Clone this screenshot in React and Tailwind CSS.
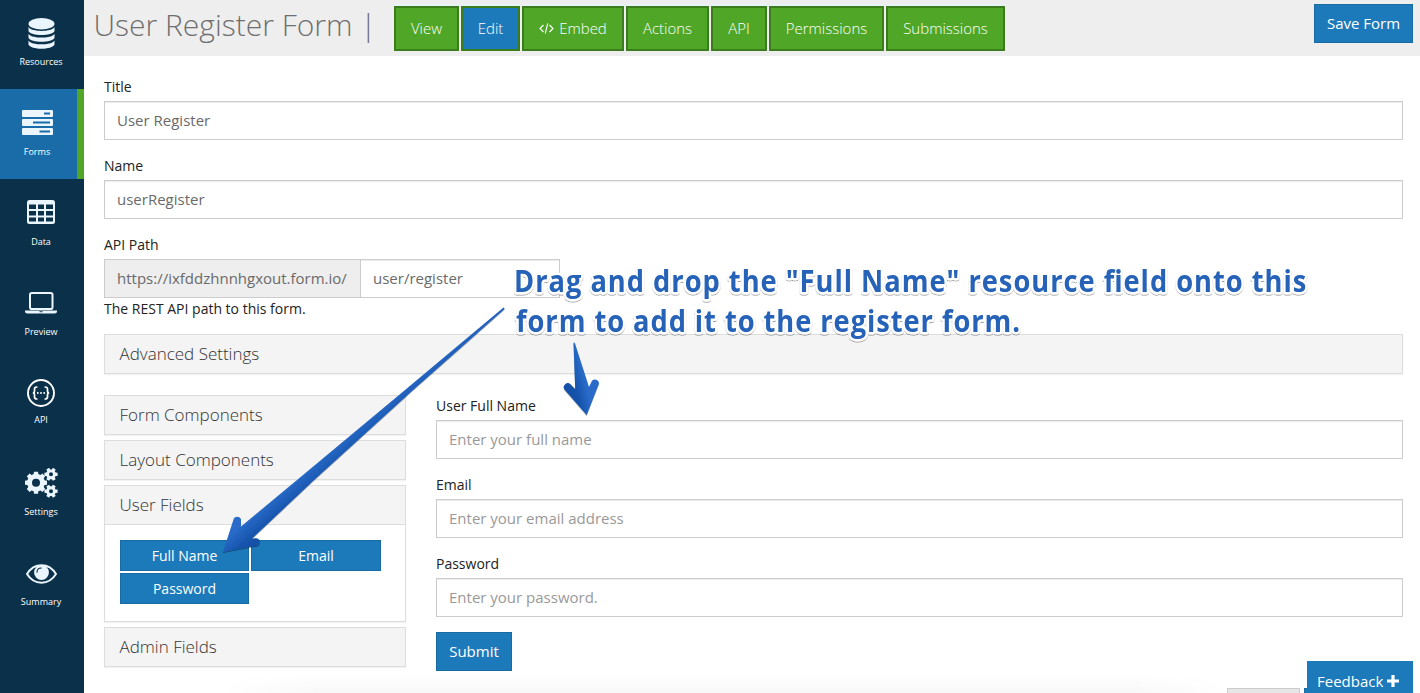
import React from "react";

const gearPath = (cx, cy, teeth, ro, ri, hole, phase = 0) => {
  const pts = [];
  const step = (Math.PI * 2) / teeth;
  for (let i = 0; i < teeth; i++) {
    const a = i * step + phase;
    [[-0.34, ri], [-0.23, ro], [0.23, ro], [0.34, ri]].forEach(([k, r]) => {
      pts.push(`${(cx + r * Math.cos(a + k * step)).toFixed(2)} ${(cy + r * Math.sin(a + k * step)).toFixed(2)}`);
    });
  }
  return `M${pts.join("L")}ZM${cx - hole} ${cy}a${hole} ${hole} 0 1 0 ${hole * 2} 0a${hole} ${hole} 0 1 0 ${-hole * 2} 0Z`;
};

const Database = () => (
  <svg className="block" width="27" height="32" viewBox="0 0 27 32" fill="#ebf5fd">
    <ellipse cx="13.500" cy="5.800" rx="13" ry="5.700" />
    <path d="M.5 9c3 5.200 23 5.200 26 0v4c-2 5.400-24 5.400-26 0zM.5 15.700c3 5.200 23 5.200 26 0v4c-2 5.400-24 5.400-26 0zM.5 22.400c3 5.200 23 5.200 26 0v4.200c-2 5.600-24 5.600-26 0z" />
  </svg>
);

const Server = () => (
  <svg className="block" width="31" height="25" viewBox="0 0 31 25">
    <g fill="#ebf5fd">
      <rect x="0" y="0" width="31" height="7" rx="1" />
      <rect x="0" y="9" width="31" height="7" rx="1" />
      <rect x="0" y="18" width="31" height="7" rx="1" />
    </g>
    <path d="M22 3.500h6M11 12.500h17M17.500 21.500h10.500" stroke="#1a6ca8" strokeWidth="2" />
  </svg>
);

const Table = () => (
  <svg className="block" width="28" height="24" viewBox="0 0 28 24">
    <path
      fillRule="evenodd"
      fill="#ebf5fd"
      d="M2.500 0h23a2.500 2.500 0 0 1 2.500 2.500v19a2.500 2.500 0 0 1-2.500 2.500h-23a2.500 2.500 0 0 1-2.500-2.500v-19A2.500 2.500 0 0 1 2.500 0zM2 4.500v4.500h7V4.500zm9 0v4.500h6V4.500zm8 0v4.500h7V4.500zM2 11v4.500h7V11zm9 0v4.500h6V11zm8 0v4.500h7V11zM2 17.500v4h7v-4zm9 0v4h6v-4zm8 0v4h7v-4z"
    />
  </svg>
);

const Laptop = () => (
  <svg className="block" width="32" height="22" viewBox="0 0 32 22">
    <rect x="5" y="1" width="22.500" height="16" rx="1.800" fill="none" stroke="#ebf5fd" strokeWidth="2" />
    <path d="M0 18.500h32v1c0 1.200-1 2-2.500 2h-27c-1.500 0-2.500-.8-2.500-2z" fill="#ebf5fd" />
    <path d="M14.500 19.700h3" stroke="#0b3049" strokeWidth=".9" />
  </svg>
);

const Braces = () => (
  <svg className="block" width="28" height="28" viewBox="0 0 28 28" fill="none" stroke="#fff" strokeLinecap="round">
    <circle cx="14" cy="14" r="13" strokeWidth="1.900" />
    <path d="M9.800 8c-2 0-2.300.8-2.300 2.300v1.700c0 1.300-.5 2-1.700 2 1.200 0 1.700.7 1.700 2v1.700c0 1.500.3 2.300 2.300 2.300M18.200 8c2 0 2.300.8 2.300 2.300v1.700c0 1.300.5 2 1.700 2-1.200 0-1.700.7-1.700 2v1.700c0 1.500-.3 2.300-2.300 2.300" strokeWidth="1.700" />
    <path d="M10.800 14h.01M14 14h.01M17.200 14h.01" strokeWidth="1.900" />
  </svg>
);

const Cogs = () => (
  <svg className="block" width="33" height="30" viewBox="0 0 33 30" fill="#ebf5fd" fillRule="evenodd">
    <path d={gearPath(11, 14.700, 8, 11.200, 8.900, 4, 0)} />
    <path d={gearPath(26, 6.300, 6, 6.800, 4.900, 2, 0)} />
    <path d={gearPath(26, 23.200, 6, 6.800, 4.900, 2, 0)} />
  </svg>
);

const Eye = () => (
  <svg className="block" width="31" height="20" viewBox="0 0 31 20">
    <path d="M1 10C8-1.800 23-1.800 30 10C23 21.500 8 21.500 1 10Z" fill="none" stroke="#ebf5fd" strokeWidth="2" />
    <circle cx="15.500" cy="8.500" r="7.400" fill="#ebf5fd" />
    <path d="M11 8.300c0-2.600 1.800-4.300 4.300-4.300" fill="none" stroke="#0b3049" strokeWidth="1.100" strokeLinecap="round" />
  </svg>
);

const navItems = [
  { label: "Resources", Icon: Database, pad: "pr-[2px] pt-[18px] h-[89px]", gap: "mt-[6px]" },
  { label: "Forms", Icon: Server, pad: "pr-[3px] pt-[21px] h-[90px] bg-[#1a6ca8] border-r-[7px] border-[#50a727]", gap: "mt-[11px]" },
  { label: "Data", Icon: Table, pad: "pr-[2px] pt-[21px] h-[90px]", gap: "mt-[12px]" },
  { label: "Preview", Icon: Laptop, pad: "pr-[2px] pt-[23px] h-[90px]", gap: "mt-[12px]" },
  { label: "API", Icon: Braces, pad: "pr-[2px] pt-[20px] h-[90px]", gap: "mt-[7px]" },
  { label: "Settings", Icon: Cogs, pad: "pr-[2px] pt-[19px] h-[90px]", gap: "mt-[8px]" },
  { label: "Summary", Icon: Eye, pad: "pr-[2px] pt-[25px] h-[90px]", gap: "mt-[12px]" },
];

const tabs = [
  ["View", "w-[65px] bg-[#50a727]"],
  ["Edit", "w-[59px] bg-[#1d7aba]"],
  ["Embed", "w-[102px] bg-[#50a727]"],
  ["Actions", "w-[83px] bg-[#50a727]"],
  ["API", "w-[56px] bg-[#50a727]"],
  ["Permissions", "w-[115px] bg-[#50a727]"],
  ["Submissions", "w-[119px] bg-[#50a727]"],
];

const inputBox = "h-[39px] border border-[#ccc] bg-white px-3 flex items-center text-[15px] shadow-[inset_0_1px_1px_rgba(0,0,0,0.075)]";

function Field({ label, value, muted }) {
  return (
    <div className="h-[79px] shrink-0">
      <div className="h-[25px] pt-[1px] text-sm leading-5 text-[#222]">{label}</div>
      <div className={`${inputBox} ${muted ? "text-[#999]" : "text-[#6a6a6a]"}`}>{value}</div>
    </div>
  );
}

function PanelHead({ children, open }) {
  return (
    <div className={`h-10 shrink-0 border border-[#ddd] bg-[#f4f4f4] px-[14.5px] flex items-center text-[17px] font-light text-[#333] ${open ? "" : "shadow-[0_1px_1px_rgba(0,0,0,0.05)]"}`}>
      {children}
    </div>
  );
}

function FieldButton({ children }) {
  return (
    <div className="h-[31px] bg-[#1d7aba] border border-[#196ba3] text-white text-sm flex items-center justify-center">
      {children}
    </div>
  );
}

function Annotation() {
  return (
    <svg className="absolute inset-0 pointer-events-none" width="1420" height="693" viewBox="0 0 1420 693">
      <defs>
        <linearGradient id="long" gradientUnits="userSpaceOnUse" x1="267" y1="503" x2="279" y2="517">
          <stop offset="0" stopColor="#296bc8" />
          <stop offset="1" stopColor="#1351a9" />
        </linearGradient>
        <linearGradient id="short" gradientUnits="userSpaceOnUse" x1="576" y1="395" x2="588" y2="392">
          <stop offset="0" stopColor="#1351a9" />
          <stop offset="1" stopColor="#296bc8" />
        </linearGradient>
        <filter id="lift" x="-10%" y="-10%" width="120%" height="130%">
          <feDropShadow dx="0" dy="1" stdDeviation="0.7" floodColor="#000" floodOpacity="0.4" />
        </filter>
      </defs>
      <path
        d="M503.500 307.500Q504.500 307.500 504.500 309L413 390L314 480L252 538.500L256 538.300A3.800 3.800 0 0 1 257.500 545.600L223 552L233.500 519.500A3.900 3.900 0 0 1 241 519.500L241 526.500L297 480L405 390Z"
        fill="url(#long)"
        filter="url(#lift)"
      />
      <path
        d="M573.500 343Q574.500 342 575 343.500L589 387L592 380.800A4 4 0 0 1 599 383.500L586.700 415L564.500 389.500A4 4 0 0 1 570.500 384.300L575.200 389Z"
        fill="url(#short)"
        filter="url(#lift)"
      />
      <g
        fontFamily="'Open Sans', sans-serif"
        fontWeight="700"
        fontSize="29.500"
        fill="#2563b8"
        stroke="#fff"
        strokeWidth="5"
        strokeLinejoin="round"
        paintOrder="stroke"
        filter="url(#lift)"
      >
        <text transform="translate(514 292) scale(0.925 1)" textLength="856.500" lengthAdjust="spacing">Drag and drop the "Full Name" resource field onto this</text>
        <text transform="translate(516 331.500) scale(0.925 1)" textLength="545" lengthAdjust="spacing">form to add it to the register form.</text>
      </g>
    </svg>
  );
}

export default function App() {
  return (
    <div className="relative flex h-[693px] w-[1420px] overflow-hidden bg-white font-['Open_Sans',sans-serif]">
      <nav className="w-[84px] shrink-0 bg-[#0b3049] text-white">
        {navItems.map(({ label, Icon, pad, gap }) => (
          <div key={label} className={`flex flex-col items-center ${pad}`}>
            <Icon />
            <div className={`text-[9px] leading-3 font-medium ${gap}`}>{label}</div>
          </div>
        ))}
      </nav>

      <main className="flex min-w-0 flex-1 flex-col">
        <header className="flex h-14 shrink-0 items-start bg-[#eee] pr-[7px]">
          <h1 className="w-[310px] shrink-0 whitespace-nowrap pl-[9.5px] pt-[5px] text-[30px] leading-10 font-light text-[#6f6f6f]">User Register Form |</h1>
          <div className="mt-[6px] flex gap-[2px]">
            {tabs.map(([label, cls]) => (
              <div key={label} className={`flex h-[45px] shrink-0 items-center justify-center gap-[5px] border-2 border-[#3b7d1c] text-[15px] font-light text-white shadow-[0_-2px_0_#e8f3f8] ${cls}`}>
                {label === "Embed" && (
                  <svg width="15" height="11" viewBox="0 0 15 11" fill="none" stroke="#fff" strokeWidth="1.100">
                    <path d="M4.500 2L1 5.500L4.500 9M10.500 2L14 5.500L10.500 9M8.700 .5L6.300 10.500" />
                  </svg>
                )}
                {label}
              </div>
            ))}
          </div>
          <div className="ml-auto mt-1 flex h-[39px] w-[99px] items-center justify-center border border-[#196ba3] bg-[#1d7aba] text-[15px] text-white">Save Form</div>
        </header>

        <div className="flex flex-1 flex-col pl-5 pr-[17px] pt-5">
          <Field label="Title" value="User Register" />
          <Field label="Name" value="userRegister" />
          <div className="h-[63px] shrink-0">
            <div className="h-[25px] pt-[1px] text-sm leading-5 text-[#222]">API Path</div>
            <div className="flex w-[456px]">
              <div className="flex h-[39px] w-[257px] items-center whitespace-nowrap border border-[#ccc] bg-[#eee] px-3 text-[15px] text-[#6a6a6a]">https://ixfddzhnnhgxout.form.io/</div>
              <div className={`${inputBox} flex-1 border-l-0 text-[#6a6a6a]`}>user/register</div>
            </div>
          </div>
          <div className="h-[37px] shrink-0 pt-[2px] text-sm leading-5 text-[#222]">The REST API path to this form.</div>
          <PanelHead>Advanced Settings</PanelHead>

          <div className="mt-[21px] flex gap-[30px]">
            <aside className="flex w-[302px] shrink-0 flex-col gap-[5px]">
              <PanelHead>Form Components</PanelHead>
              <PanelHead>Layout Components</PanelHead>
              <section className="shadow-[0_1px_1px_rgba(0,0,0,0.05)]">
                <PanelHead open>User Fields</PanelHead>
                <div className="grid h-[97px] grid-cols-[129px_130px] content-start gap-[2px] border border-t-0 border-[#ddd] bg-white pl-[15px] pt-[15px]">
                  <FieldButton>Full Name</FieldButton>
                  <FieldButton>Email</FieldButton>
                  <FieldButton>Password</FieldButton>
                </div>
              </section>
              <PanelHead>Admin Fields</PanelHead>
            </aside>
            <section className="flex flex-1 flex-col">
              <Field label="User Full Name" value="Enter your full name" muted />
              <Field label="Email" value="Enter your email address" muted />
              <Field label="Password" value="Enter your password." muted />
              <div className="flex h-[39px] w-[76px] items-center justify-center border border-[#196ba3] bg-[#1d7aba] text-[15px] text-white">Submit</div>
            </section>
          </div>
        </div>
      </main>

      <div className="absolute bottom-0 left-[220px] h-[18px] w-[1010px] bg-gradient-to-t from-black/[0.03] to-transparent [mask-image:linear-gradient(to_right,transparent,black_10%,black_90%,transparent)]" />
      <div className="absolute left-[1227px] top-[688px] h-[5px] w-[73px] border border-b-0 border-[#ccc] bg-[#e6e6e6]" />
      <div className="absolute left-[1304px] top-[688px] h-[5px] w-[99px] border border-b-0 border-[#196ba3] bg-[#1d7aba]" />
      <div className="absolute left-[1307px] top-[661px] flex h-[40px] w-[106px] items-center gap-1 bg-[#1d7aba] pl-[10px] text-[15px] text-white">
        Feedback
        <svg width="12" height="12" viewBox="0 0 12 12" stroke="#fff" strokeWidth="3.200">
          <path d="M6 0V12M0 6H12" />
        </svg>
      </div>
      <Annotation />
    </div>
  );
}
